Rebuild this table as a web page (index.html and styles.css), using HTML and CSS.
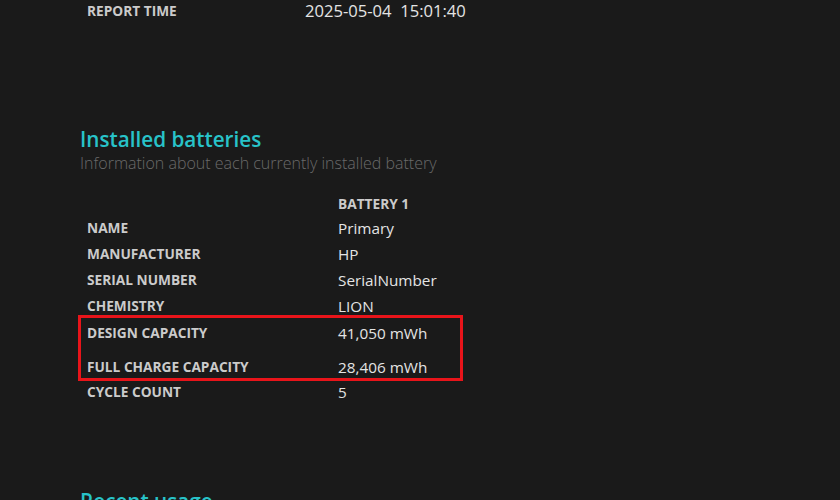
FILE: index.html
```html
<!DOCTYPE html>
<html>
<head>
<meta charset="utf-8">
<link rel="stylesheet" href="styles.css">
</head>
<body>
<div class="page">
  <div class="report">
    <span class="label">REPORT TIME</span>
    <span class="value report-value">2025-05-04&nbsp;&nbsp;15:01:40</span>
  </div>

  <h2 class="heading">Installed batteries</h2>
  <p class="subtitle">Information about each currently installed battery</p>

  <div class="table">
    <div class="row head"><span></span><span class="label">BATTERY 1</span></div>
    <div class="row"><span class="label">NAME</span><span class="value">Primary</span></div>
    <div class="row"><span class="label">MANUFACTURER</span><span class="value">HP</span></div>
    <div class="row"><span class="label">SERIAL NUMBER</span><span class="value">SerialNumber</span></div>
    <div class="row"><span class="label">CHEMISTRY</span><span class="value">LION</span></div>
    <div class="highlight">
      <div class="row"><span class="label">DESIGN CAPACITY</span><span class="value">41,050 mWh</span></div>
      <div class="row"><span class="label">FULL CHARGE CAPACITY</span><span class="value">28,406 mWh</span></div>
    </div>
    <div class="row last"><span class="label">CYCLE COUNT</span><span class="value">5</span></div>
  </div>

  <h2 class="heading recent">Recent usage</h2>
</div>
</body>
</html>
```

FILE: styles.css
```css
html, body {
  margin: 0;
  padding: 0;
  background: #1a1a1a;
  height: 100%;
  overflow: hidden;
}
body {
  font-family: "Open Sans", "Noto Sans", sans-serif;
}
.page {
  padding-left: 80px;
}
.label {
  font-weight: 700;
  font-size: 13.7px;
  color: #cbcbcb;
}
.value {
  font-size: 15.3px;
  color: #e4e4e4;
}
.report {
  display: grid;
  grid-template-columns: 218px auto;
  padding-left: 7px;
  height: 22px;
  line-height: 22px;
}
.report-value {
  font-size: 16.6px;
}
.heading {
  margin: 104px 0 0 0;
  font-size: 20.7px;
  font-weight: 600;
  color: #28c3c9;
  line-height: 26px;
  height: 26px;
}
.subtitle {
  margin: 0;
  font-size: 16px;
  font-weight: 300;
  color: #6a6a6a;
  line-height: 22px;
}
.table {
  margin-top: 19px;
  width: 390px;
}
.row {
  display: grid;
  grid-template-columns: 251px auto;
  padding-left: 7px;
  height: 26px;
  line-height: 26px;
}
.row.head {
  height: 22px;
  line-height: 22px;
}
.highlight {
  margin-left: -2px;
  margin-top: -4px;
  width: 379px;
  border: 3px solid #e8141a;
  padding: 5px 0 0 0;
  display: flex;
  flex-direction: column;
  gap: 14px;
  height: 55px;
  box-sizing: content-box;
}
.highlight .row {
  padding-left: 6px;
  height: 20px;
  line-height: 20px;
  flex-shrink: 0;
}
.row.last {
  margin-top: -2px;
}
.recent {
  margin-top: 83px;
}
```
